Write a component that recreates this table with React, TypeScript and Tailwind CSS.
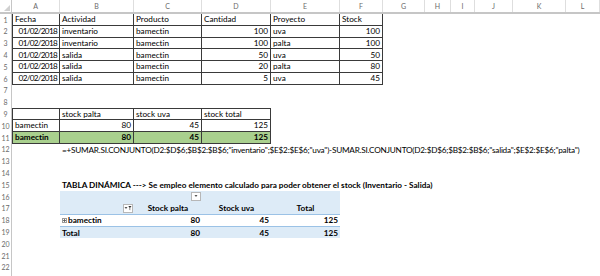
import React from 'react';
import clsx from 'clsx';

// Column track sizes: row header, then A..L
const GRID = 'grid grid-cols-[12px_48px_74px_68px_69px_69px_43px_42px_26px_24px_38px_53px_1fr]';
const LETTERS = ['A', 'B', 'C', 'D', 'E', 'F', 'G', 'H', 'I', 'J', 'K', 'L'];

type Cell = {
  v?: React.ReactNode;
  right?: boolean;
  center?: boolean;
  bold?: boolean;
  cls?: string;
};

function Row({ n, cells = [] }: { n?: number; cells?: Cell[] }) {
  return (
    <div className={clsx(GRID, 'h-[11.8px]')}>
      <div className="flex items-center justify-center border-r border-[#c6c6c6] bg-white text-[7px] text-[#6b6b6b]">
        {n}
      </div>
      {LETTERS.map((_, i) => {
        const c = cells[i] || {};
        return (
          <div
            key={i}
            className={clsx(
              'relative flex min-w-0 items-center whitespace-nowrap px-[2px] leading-none',
              c.right ? 'justify-end' : c.center ? 'justify-center' : 'justify-start',
              c.bold && 'font-bold',
              c.cls
            )}
          >
            {c.v}
          </div>
        );
      })}
    </div>
  );
}

const B = 'border-r border-b border-[#3a3a3a]';
const BL = 'border-l border-r border-b border-[#3a3a3a]';

const dataRows: [string, string, string, string, string, string][] = [
  ['01/02/2018', 'inventario', 'bamectin', '100', 'uva', '100'],
  ['01/02/2018', 'inventario', 'bamectin', '100', 'palta', '100'],
  ['01/02/2018', 'salida', 'bamectin', '50', 'uva', '50'],
  ['01/02/2018', 'salida', 'bamectin', '20', 'palta', '80'],
  ['02/02/2018', 'salida', 'bamectin', '5', 'uva', '45'],
];

function DropButton({ filter }: { filter?: boolean }) {
  return (
    <span className="absolute right-[1px] top-[1px] flex h-[9px] w-[10px] items-center justify-center border border-[#b7b7b7] bg-white">
      <svg width="8" height="6" viewBox="0 0 8 6">
        {filter ? (
          <>
            <path d="M0.5 2h3L2 4z" fill="#555" />
            <path d="M4.3 1h3.2L6.2 2.8V5.3L5.6 4.9V2.8z" fill="#333" />
          </>
        ) : (
          <path d="M2.5 2h3L4 4z" fill="#555" />
        )}
      </svg>
    </span>
  );
}

export default function App() {
  const formula =
    '=+SUMAR.SI.CONJUNTO(D2:$D$6;$B$2:$B$6;"inventario";$E$2:$E$6;"uva")-SUMAR.SI.CONJUNTO(D2:$D$6;$B$2:$B$6;"salida";$E$2:$E$6;"palta")';
  const pivotHead = 'bg-[#ddebf7] border-b border-[#9bc2e6]';
  const pivotTotal = 'bg-[#ddebf7] border-t border-[#9bc2e6]';

  return (
    <div className="h-[276px] w-[600px] overflow-hidden bg-white text-[8.2px] text-black [font-family:Lato,'Liberation_Sans',sans-serif] [font-variant-ligatures:none]">
      {/* column headers */}
      <div className={clsx(GRID, 'h-[14px] border-b-2 border-[#c6c6c6]')}>
        <div className="relative border-r border-[#c6c6c6]">
          <svg className="absolute bottom-[1px] right-[1px]" width="6" height="6" viewBox="0 0 6 6">
            <path d="M6 0V6H0z" fill="#d0d0d0" />
          </svg>
        </div>
        {LETTERS.map((l) => (
          <div key={l} className="flex items-center justify-center border-r border-[#dedede] text-[7px] text-[#6b6b6b]">
            {l}
          </div>
        ))}
      </div>

      {/* source table */}
      <Row
        n={1}
        cells={[
          { v: 'Fecha', cls: BL },
          { v: 'Actividad', cls: B },
          { v: 'Producto', cls: B },
          { v: 'Cantidad', cls: B },
          { v: 'Proyecto', cls: B },
          { v: 'Stock', cls: B },
        ]}
      />
      {dataRows.map((r, i) => (
        <Row
          key={i}
          n={i + 2}
          cells={[
            { v: r[0], right: true, cls: clsx(BL, 'tracking-[-0.7px]') },
            { v: r[1], cls: B },
            { v: r[2], cls: B },
            { v: r[3], right: true, cls: B },
            { v: r[4], cls: B },
            { v: r[5], right: true, cls: B },
          ]}
        />
      ))}
      <Row n={7} />
      <Row n={8} />

      {/* summary table */}
      <Row
        n={9}
        cells={[
          { cls: clsx(BL, 'border-t') },
          { v: 'stock palta', cls: clsx(B, 'border-t') },
          { v: 'stock uva', cls: clsx(B, 'border-t') },
          { v: 'stock total', cls: clsx(B, 'border-t') },
        ]}
      />
      <Row
        n={10}
        cells={[
          { v: 'bamectin', cls: BL },
          { v: '80', right: true, cls: B },
          { v: '45', right: true, cls: B },
          { v: '125', right: true, cls: B },
        ]}
      />
      <Row
        n={11}
        cells={[
          { v: 'bamectin', bold: true, cls: clsx(BL, 'bg-[#a9d08e]') },
          { v: '80', bold: true, right: true, cls: clsx(B, 'bg-[#a9d08e]') },
          { v: '45', bold: true, right: true, cls: clsx(B, 'bg-[#a9d08e]') },
          { v: '125', bold: true, right: true, cls: clsx(B, 'bg-[#a9d08e]') },
        ]}
      />
      <Row n={12} cells={[{}, { v: formula, cls: 'tracking-[-0.22px]' }]} />
      <Row n={13} />
      <Row n={14} />
      <Row
        n={15}
        cells={[
          {},
          {
            v: 'TABLA DINÁMICA ---> Se empleo elemento calculado para poder obtener el stock (Inventario - Salida)',
            bold: true,
          },
        ]}
      />

      {/* pivot table */}
      <Row
        n={16}
        cells={[
          {},
          { cls: 'bg-[#ddebf7]' },
          { v: <DropButton />, cls: 'bg-[#ddebf7]' },
          { cls: 'bg-[#ddebf7]' },
          { cls: 'bg-[#ddebf7]' },
        ]}
      />
      <Row
        n={17}
        cells={[
          {},
          { v: <DropButton filter />, cls: pivotHead },
          { v: 'Stock palta', center: true, bold: true, cls: pivotHead },
          { v: 'Stock uva', center: true, bold: true, cls: pivotHead },
          { v: 'Total', center: true, bold: true, cls: pivotHead },
        ]}
      />
      <Row
        n={18}
        cells={[
          {},
          {
            v: (
              <>
                <span className="mr-[1px] flex h-[5px] w-[5px] items-center justify-center border border-[#9a9a9a]">
                  <svg width="3" height="3" viewBox="0 0 3 3">
                    <path d="M0 1.5h3M1.5 0v3" stroke="#555" strokeWidth="0.8" />
                  </svg>
                </span>
                bamectin
              </>
            ),
            bold: true,
          },
          { v: '80', right: true, bold: true },
          { v: '45', right: true, bold: true },
          { v: '125', right: true, bold: true },
        ]}
      />
      <Row
        n={19}
        cells={[
          {},
          { v: 'Total', bold: true, cls: pivotTotal },
          { v: '80', right: true, bold: true, cls: pivotTotal },
          { v: '45', right: true, bold: true, cls: pivotTotal },
          { v: '125', right: true, bold: true, cls: pivotTotal },
        ]}
      />
      <Row n={20} />
      <Row n={21} />
      <Row n={22} />
      <Row />
    </div>
  );
}
